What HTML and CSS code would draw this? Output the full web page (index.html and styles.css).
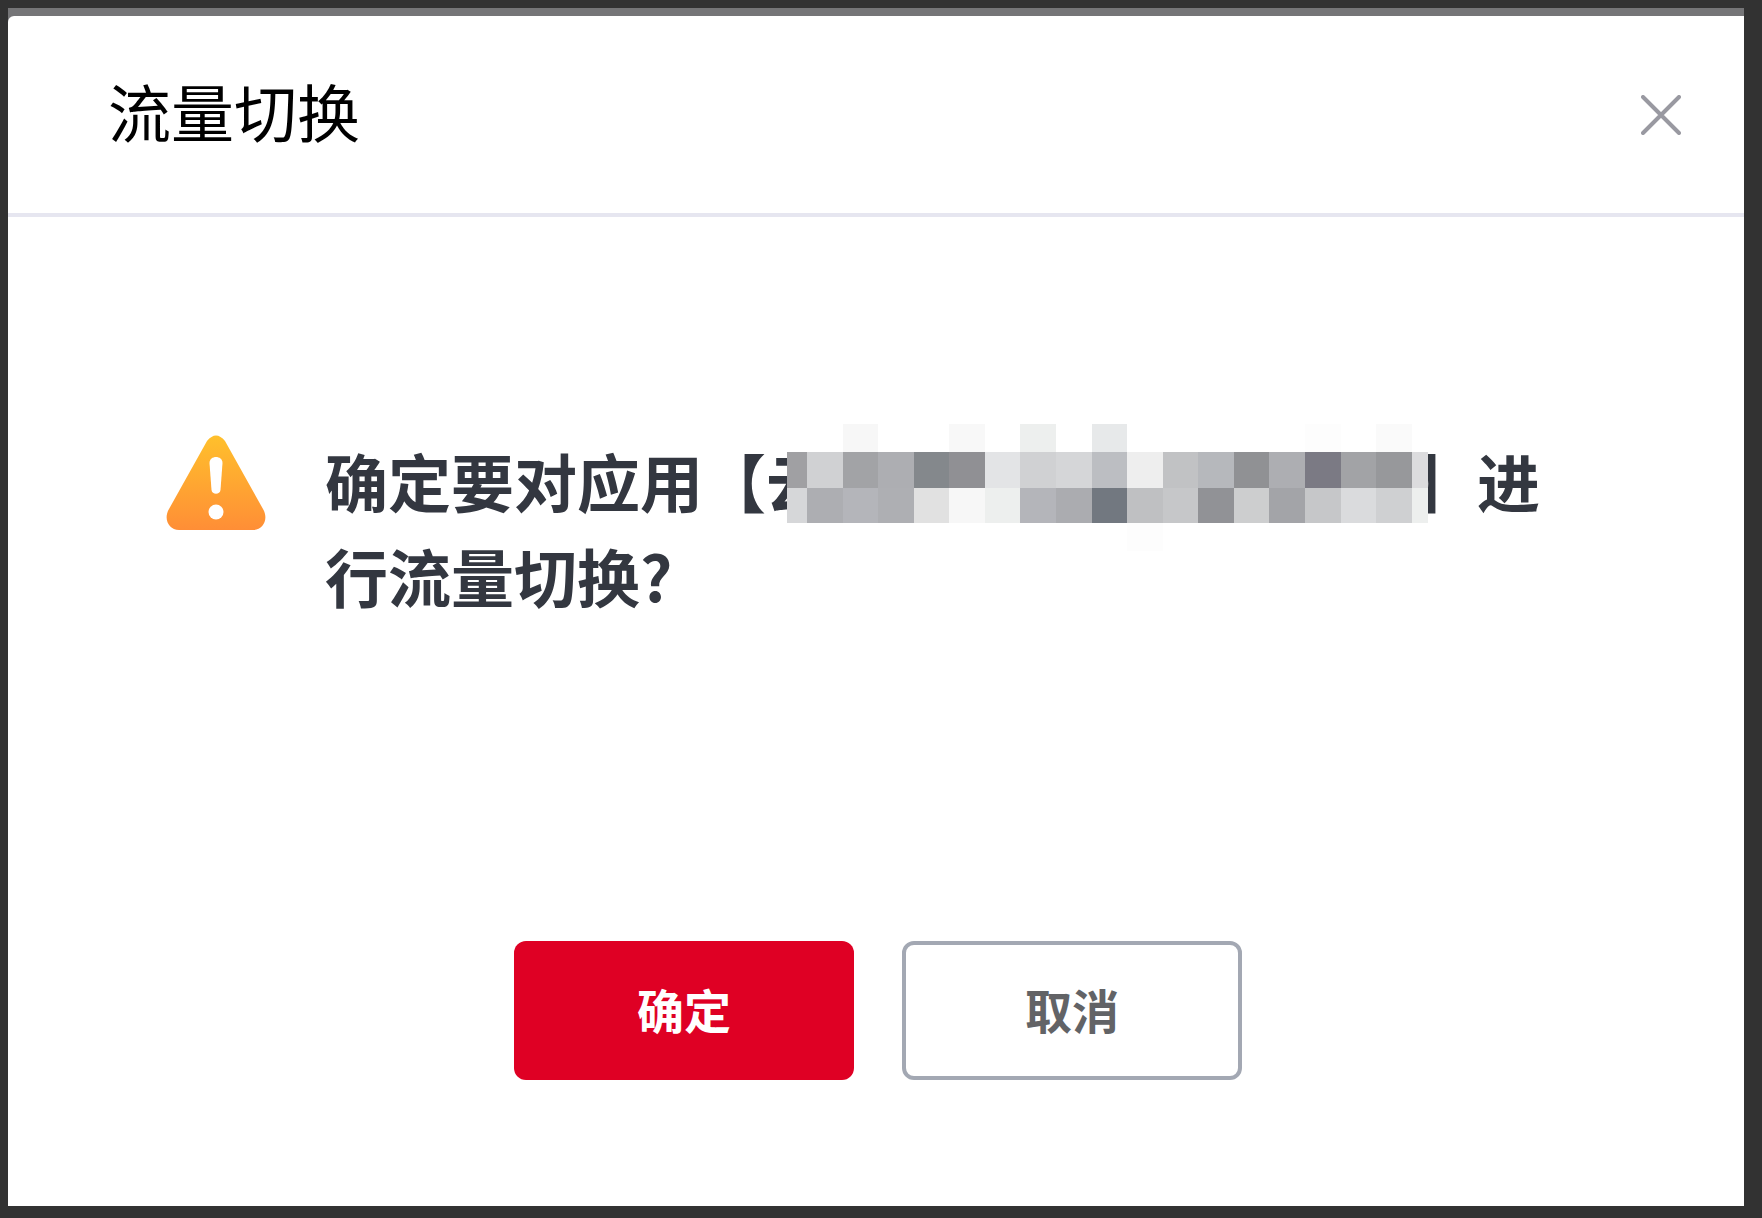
FILE: index.html
```html
<!DOCTYPE html>
<html lang="zh-CN">
<head>
    <meta charset="UTF-8">
    <title>流量切换</title>
    <link rel="stylesheet" href="styles.css">
</head>
<body>

    <div class="mask">
        <div class="dialog" role="dialog" aria-labelledby="dialogTitle">
            <div class="dialog-header">
                <h2 class="dialog-title" id="dialogTitle">流量切换</h2>
                <button type="button" class="closeBtn" aria-label="关闭">
                    <svg class="close-icon" viewBox="0 0 40 40">
                        <path d="M2 2L38 38M38 2L2 38"/>
                    </svg>
                </button>
            </div>

            <div class="dialog-body">
                <svg class="warn-icon" viewBox="0 0 100 96">
                    <defs>
                        <linearGradient id="warnFill" x1="0" y1="0" x2="0" y2="1">
                            <stop offset="0" stop-color="#ffc02c"/>
                            <stop offset="1" stop-color="#ff8e36"/>
                        </linearGradient>
                    </defs>
                    <path fill="url(#warnFill)" d="M41 6Q50 -5 59 6L97 74C103 84 97 95 87 95H13C3 95 -3 84 3 74Z"/>
                    <path fill="#fff" d="M43.500 28C43.500 20 56.500 20 56.500 28L54.500 55C54 60 46 60 45.500 55Z"/>
                    <circle fill="#fff" cx="50" cy="77" r="7.500"/>
                </svg>
                <p class="message">确定要对应用【云<span class="masked"><svg class="mosaic" viewBox="0 0 641 127" shape-rendering="crispEdges">
                        <!-- top row -->
                        <rect x="56" y="0" width="35" height="28" fill="#f7f7f7"/>
                        <rect x="162" y="0" width="36" height="28" fill="#f8f8f8"/>
                        <rect x="233" y="0" width="36" height="28" fill="#edefee"/>
                        <rect x="305" y="0" width="35" height="28" fill="#e7e9ea"/>
                        <rect x="518" y="0" width="36" height="28" fill="#fdfdfd"/>
                        <rect x="589" y="0" width="36" height="28" fill="#fafafa"/>
                        <!-- second row -->
                        <rect x="0" y="28" width="20" height="36" fill="#a0a0a3"/>
                        <rect x="20" y="28" width="36" height="36" fill="#d0d1d3"/>
                        <rect x="56" y="28" width="35" height="36" fill="#a2a3a6"/>
                        <rect x="91" y="28" width="36" height="36" fill="#adaeb2"/>
                        <rect x="127" y="28" width="35" height="36" fill="#84888c"/>
                        <rect x="162" y="28" width="36" height="36" fill="#909094"/>
                        <rect x="198" y="28" width="35" height="36" fill="#e3e4e6"/>
                        <rect x="233" y="28" width="36" height="36" fill="#d0d1d3"/>
                        <rect x="269" y="28" width="36" height="36" fill="#d5d6d8"/>
                        <rect x="305" y="28" width="35" height="36" fill="#bcbec2"/>
                        <rect x="340" y="28" width="36" height="36" fill="#eeeeee"/>
                        <rect x="376" y="28" width="35" height="36" fill="#c1c2c4"/>
                        <rect x="411" y="28" width="36" height="36" fill="#b6b8bc"/>
                        <rect x="447" y="28" width="35" height="36" fill="#909194"/>
                        <rect x="482" y="28" width="36" height="36" fill="#adaeb2"/>
                        <rect x="518" y="28" width="36" height="36" fill="#7b7a84"/>
                        <rect x="554" y="28" width="35" height="36" fill="#a2a3a6"/>
                        <rect x="589" y="28" width="36" height="36" fill="#97989b"/>
                        <rect x="625" y="28" width="16" height="36" fill="#dcdcde"/>
                        <!-- third row -->
                        <rect x="0" y="64" width="20" height="35" fill="#d6d7d9"/>
                        <rect x="20" y="64" width="36" height="35" fill="#adaeb2"/>
                        <rect x="56" y="64" width="35" height="35" fill="#b4b5ba"/>
                        <rect x="91" y="64" width="36" height="35" fill="#aeafb3"/>
                        <rect x="127" y="64" width="35" height="35" fill="#e1e1e1"/>
                        <rect x="162" y="64" width="36" height="35" fill="#f7f7f7"/>
                        <rect x="198" y="64" width="35" height="35" fill="#edefee"/>
                        <rect x="233" y="64" width="36" height="35" fill="#b4b5ba"/>
                        <rect x="269" y="64" width="36" height="35" fill="#abacb0"/>
                        <rect x="305" y="64" width="35" height="35" fill="#727880"/>
                        <rect x="340" y="64" width="36" height="35" fill="#bfc0c2"/>
                        <rect x="376" y="64" width="35" height="35" fill="#c6c7c9"/>
                        <rect x="411" y="64" width="36" height="35" fill="#919296"/>
                        <rect x="447" y="64" width="35" height="35" fill="#cdcecf"/>
                        <rect x="482" y="64" width="36" height="35" fill="#a3a4a8"/>
                        <rect x="518" y="64" width="36" height="35" fill="#c6c7c9"/>
                        <rect x="554" y="64" width="35" height="35" fill="#dadbdd"/>
                        <rect x="589" y="64" width="36" height="35" fill="#cfd0d2"/>
                        <rect x="625" y="64" width="16" height="35" fill="#edefee"/>
                        <!-- bottom row -->
                        <rect x="340" y="99" width="36" height="28" fill="#fdfdfd"/>
                    </svg></span>】进行流量切换?</p>
            </div>

            <div class="dialog-footer">
                <button type="button" class="btn btn-ok">确定</button>
                <button type="button" class="btn btn-cancel">取消</button>
            </div>
        </div>
    </div>

</body>
</html>
```
FILE: styles.css
```css
*{
    margin: 0;
    padding: 0;
    box-sizing: border-box;
}
body {
    display: flex;
    min-height: 100vh;
    padding: 8px 18px 12px 8px;
    font-family: "Noto Sans CJK SC", sans-serif;
    background-color: #323232;
}
.mask{
    display: flex;
    flex: 1;
    padding-top: 8px;
    background-color: #757577;
}
.dialog{
    display: flex;
    flex-direction: column;
    flex: 1;
    border-radius: 6px 0 0 0;
    background-color: #fff;
}
.dialog-header{
    display: flex;
    justify-content: space-between;
    align-items: center;
    padding: 46px 57px 56px 100px;
    border-bottom: 4px solid #e6e6f0;
}
.dialog-title{
    font-size: 63px;
    line-height: 95px;
    font-weight: 400;
    color: #000;
}
.closeBtn{
    padding: 16px 6px 6px;
    border: none;
    background: none;
    cursor: pointer;
}
.close-icon{
    display: block;
    width: 40px;
    height: 40px;
    fill: none;
    stroke: #9999a1;
    stroke-width: 4;
    stroke-linecap: round;
}
.dialog-body{
    display: flex;
    flex: 1;
    align-items: flex-start;
    gap: 59px;
    padding: 215px 158px 0;
}
.warn-icon{
    flex: none;
    width: 100px;
    height: 102px;
}
.message{
    flex: 1;
    font-size: 63px;
    line-height: 95px;
    font-weight: 700;
    color: #333740;
}
/* hidden application name */
.masked{
    position: relative;
    display: inline-block;
    width: 585px;
    height: 46px;
}
.mosaic{
    position: absolute;
    left: -42px;
    top: -37px;
    width: 641px;
    height: 127px;
}
.dialog-footer{
    display: flex;
    justify-content: center;
    gap: 48px;
    padding: 0 0 126px 4px;
}
.btn{
    width: 340px;
    height: 139px;
    padding-bottom: 4px;
    border-radius: 12px;
    font-family: inherit;
    font-size: 47px;
    font-weight: 700;
    cursor: pointer;
}
.btn-ok{
    border: none;
    background-color: #df0024;
    color: #fff;
}
.btn-cancel{
    border: 4px solid #a3a8b3;
    background-color: #fff;
    color: #626366;
}
```
